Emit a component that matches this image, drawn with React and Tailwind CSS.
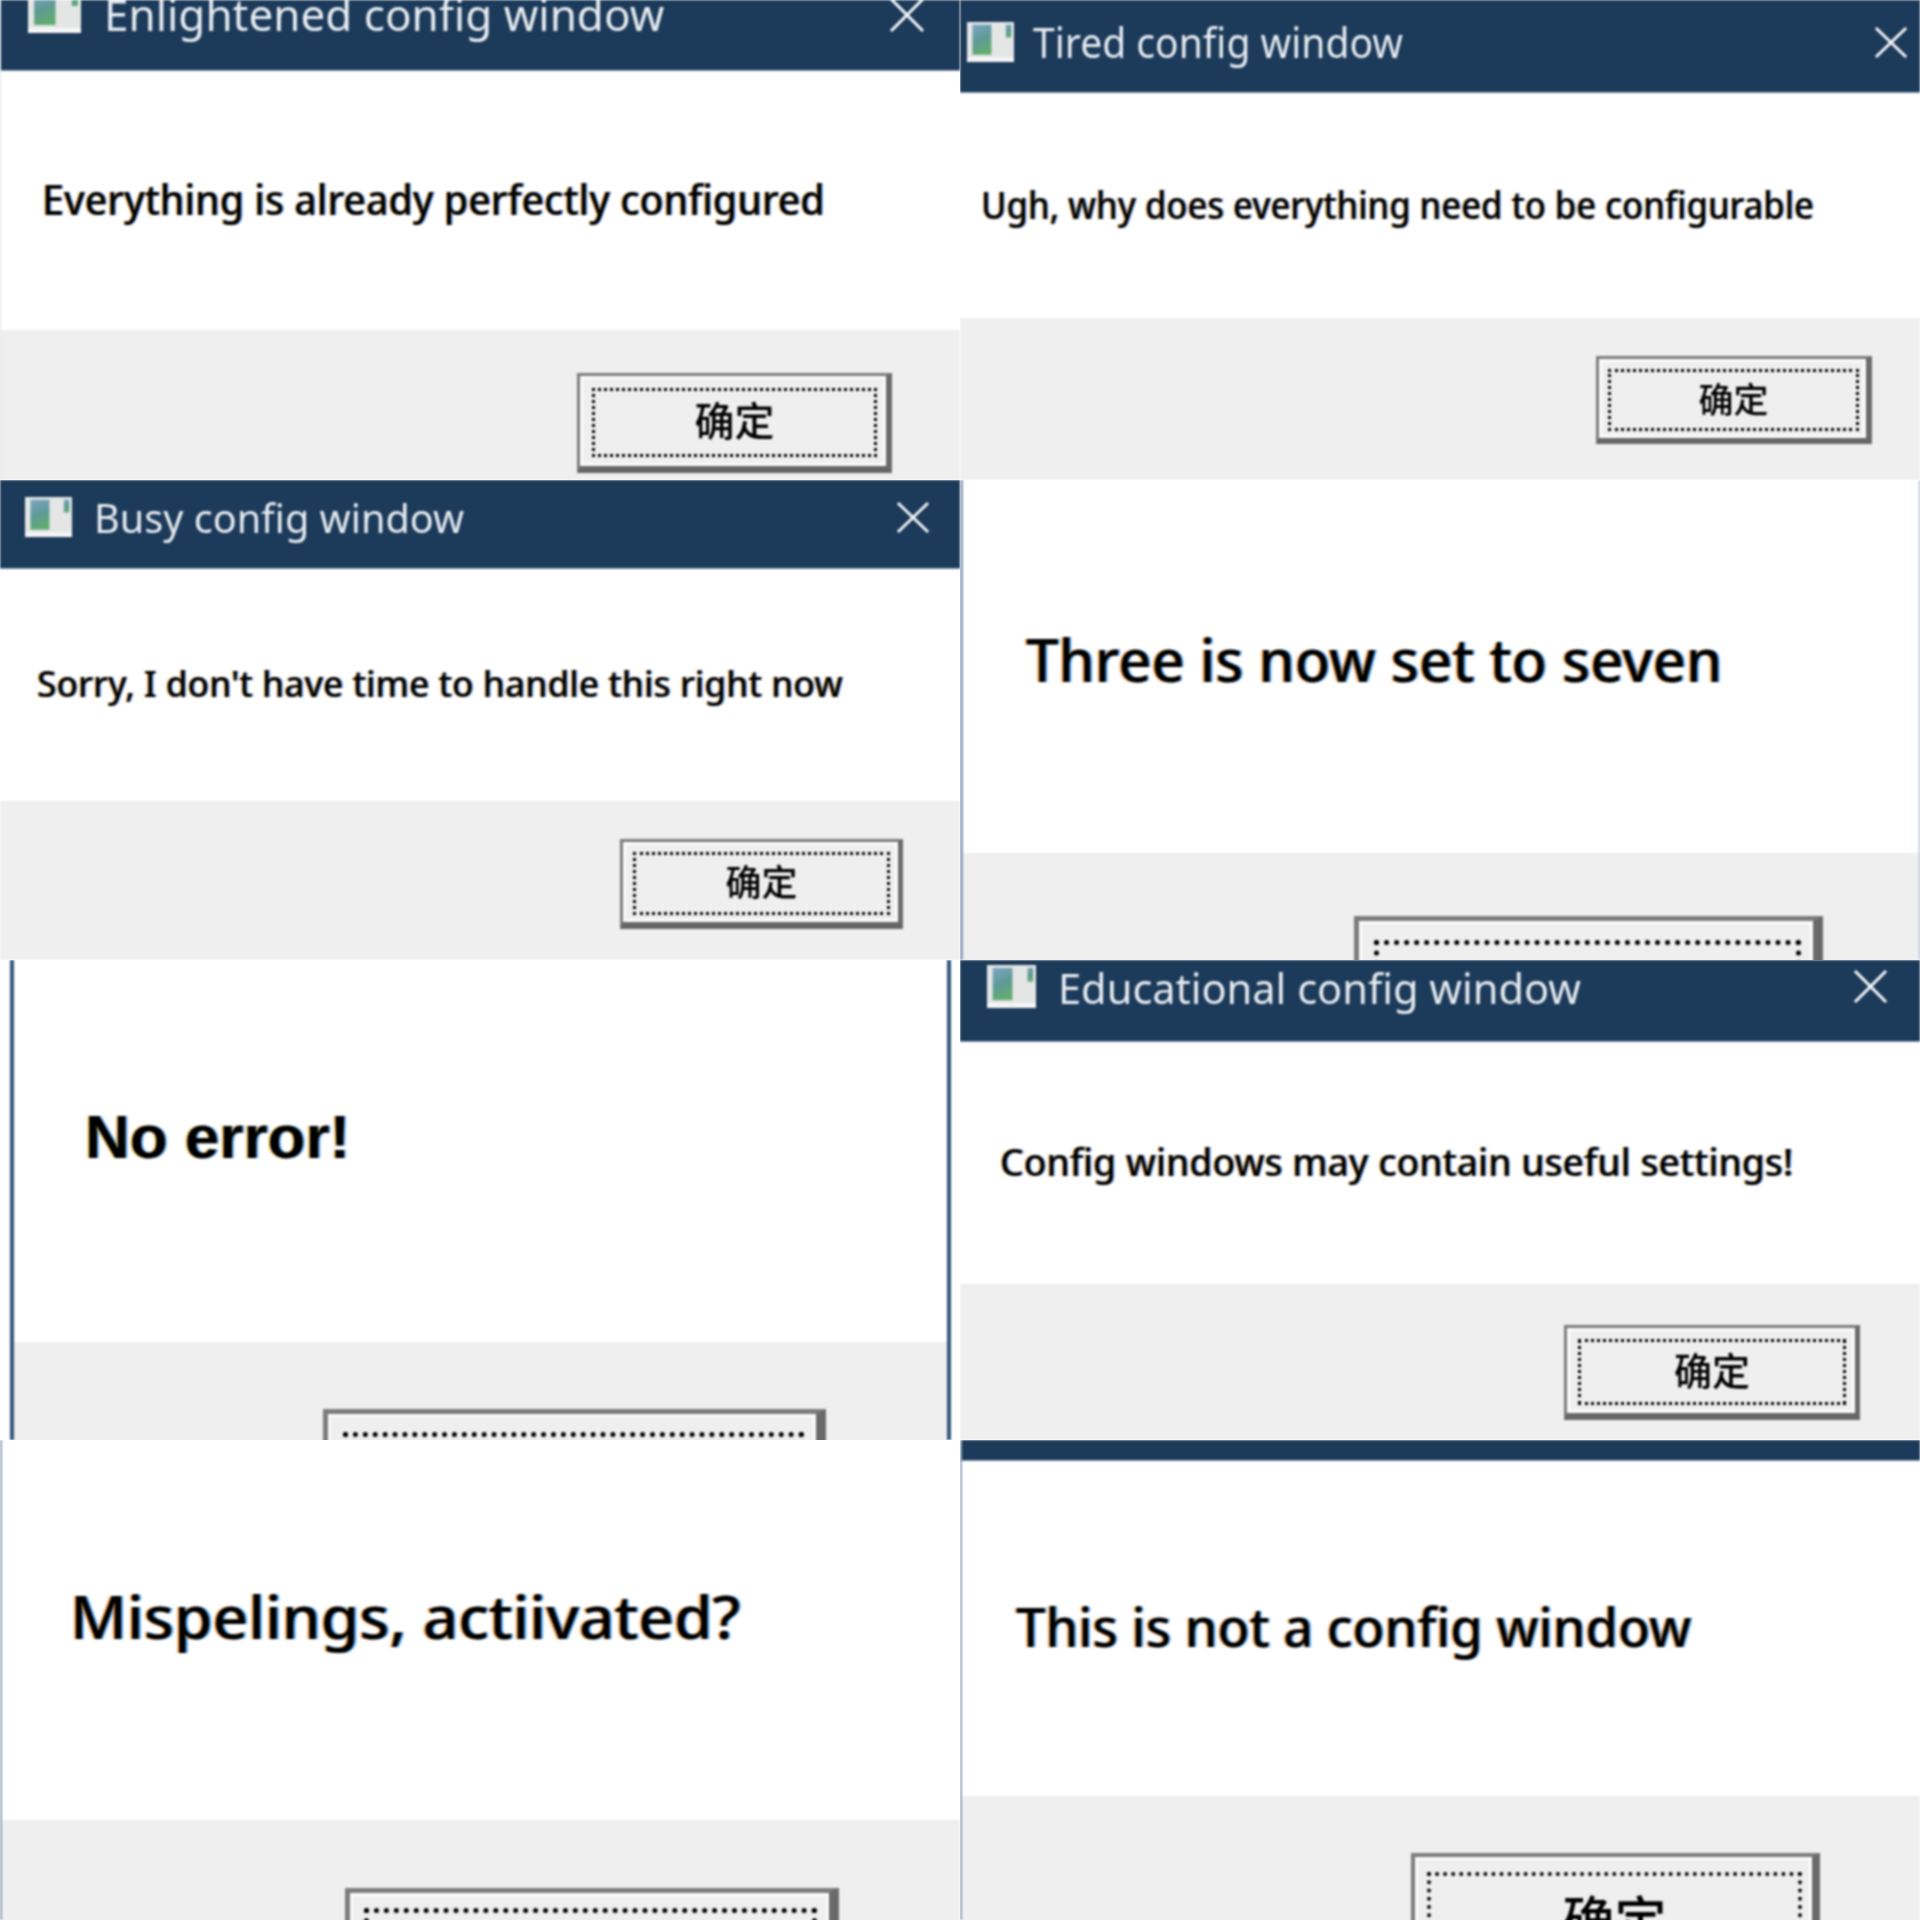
const sans = "font-['Noto_Sans','Noto_Sans_CJK_SC',sans-serif]";

function AppIcon({ cls }) {
  return (
    <svg viewBox="0 0 52 44" className={cls} preserveAspectRatio="none">
      <defs>
        <linearGradient id="winpanel" x1="0" y1="0" x2="0.3" y2="1">
          <stop offset="0" stopColor="#7da6c4" />
          <stop offset="0.55" stopColor="#5f9a98" />
          <stop offset="1" stopColor="#62ab72" />
        </linearGradient>
      </defs>
      <rect x="0" y="0" width="52" height="44" fill="#e4e6e6" />
      <rect x="0" y="39" width="52" height="5" fill="#f6f6f6" />
      <rect x="6" y="3" width="21" height="33" fill="url(#winpanel)" />
      <rect x="43" y="3" width="6" height="14" fill="url(#winpanel)" />
    </svg>
  );
}

function CloseIcon({ cls }) {
  return (
    <svg viewBox="0 0 36 34" className={cls} preserveAspectRatio="none">
      <path d="M2 1 L34 33 M34 1 L2 33" stroke="#f4f6f8" strokeWidth="3" fill="none" />
    </svg>
  );
}

function OkButton({ btn, inner, focus, label }) {
  return (
    <div className={`flex shrink-0 border-t-[#7c7c7c] border-l-[#7c7c7c] border-r-[#6a6a6a] border-b-[#666666] bg-[#efefef] ${btn}`}>
      <div className={`flex flex-1 bg-[#efefef] shadow-[inset_0_0_0_3px_#fbfbfb] ${inner}`}>
        <div className={`flex flex-1 items-center justify-center border-dotted border-black font-medium text-black leading-none ${focus} ${label}`}>
          确定
        </div>
      </div>
    </div>
  );
}

function Dialog({ d }) {
  return (
    <div className={`h-[480px] overflow-hidden bg-white ${sans}`}>
      <div className={`flex h-full flex-col blur-[0.9px] ${d.frame}`}>
        {d.bar && (
          <div className={`flex shrink-0 items-start overflow-hidden bg-[#1c3a5a] border-b border-[#8fa2b8] ${d.bar}`}>
            {d.title && <AppIcon cls={`shrink-0 ${d.icon}`} />}
            {d.title && (
              <span className={`whitespace-nowrap leading-none text-[#e6ebf0] origin-left ${d.titleCls}`}>{d.title}</span>
            )}
            {d.title && <CloseIcon cls={`ml-auto shrink-0 ${d.close}`} />}
          </div>
        )}
        <div className={`shrink-0 bg-white ${d.body}`}>
          <p className={`whitespace-nowrap leading-none text-black origin-left ${d.msgCls}`}>{d.msg}</p>
        </div>
        <div className={`flex flex-1 items-start justify-end bg-[#efefef] ${d.foot}`}>
          <OkButton btn={d.btn} inner={d.inner} focus={d.focus} label={d.label} />
        </div>
      </div>
    </div>
  );
}

const dialogs = [
  {
    frame: "border-l border-[#d8dde3]",
    bar: "h-[71px]",
    title: "Enlightened config window",
    icon: "-mt-[11px] ml-[27px] h-[44px] w-[53px]",
    titleCls: "-mt-[8px] ml-[23px] text-[44px] scale-x-[1.0]",
    close: "-mt-[2px] mr-[35px] h-[34px] w-[36px]",
    body: "h-[259px] pl-[41px] pt-[107px]",
    msgCls: "font-medium text-[42px] scale-x-[0.937] [text-shadow:-1.5px_0_0_rgba(255,150,0,.6),1.5px_0_0_rgba(0,110,255,.6)]",
    msg: "Everything is already perfectly configured",
    foot: "pr-[68px] pt-[43px]",
    btn: "h-[100px] w-[315px] border-t-[3px] border-l-[3px] border-r-[6px] border-b-[7px]",
    inner: "pt-[12px] pl-[12px] pr-[9px] pb-[9px]",
    focus: "border-[3px] pb-[4px]",
    label: "text-[40px]",
  },
  {
    frame: "",
    bar: "h-[93px]",
    title: "Tired config window",
    icon: "mt-[22px] ml-[7px] h-[40px] w-[47px]",
    titleCls: "mt-[21px] ml-[19px] text-[42px] scale-x-[0.93]",
    close: "mt-[27px] mr-[12px] h-[31px] w-[34px]",
    body: "h-[225px] pl-[21px] pt-[92px]",
    msgCls: "font-medium text-[38px] scale-x-[0.91] [text-shadow:-1.5px_0_0_rgba(255,150,0,.55),1.5px_0_0_rgba(0,110,255,.55)]",
    msg: "Ugh, why does everything need to be configurable",
    foot: "pr-[48px] pt-[38px]",
    btn: "h-[88px] w-[276px] border-t-[3px] border-l-[3px] border-r-[6px] border-b-[6px]",
    inner: "pt-[10px] pl-[9px] pr-[7px] pb-[7px]",
    focus: "border-[3px] pb-[2px]",
    label: "text-[35px]",
  },
  {
    frame: "",
    bar: "h-[89px]",
    title: "Busy config window",
    icon: "mt-[17px] ml-[25px] h-[40px] w-[47px]",
    titleCls: "mt-[18px] ml-[22px] text-[40px] scale-x-[0.99]",
    close: "mt-[22px] mr-[30px] h-[31px] w-[34px]",
    body: "h-[232px] pl-[37px] pt-[95px]",
    msgCls: "font-medium text-[37px] scale-x-[0.955] [text-shadow:-1.5px_0_0_rgba(255,150,0,.55),1.5px_0_0_rgba(0,110,255,.55)]",
    msg: "Sorry, I don't have time to handle this right now",
    foot: "pr-[57px] pt-[38px]",
    btn: "h-[90px] w-[283px] border-t-[3px] border-l-[3px] border-r-[5px] border-b-[7px]",
    inner: "pt-[10px] pl-[10px] pr-[8px] pb-[7px]",
    focus: "border-[3px] pb-[1px]",
    label: "text-[36px]",
  },
  {
    frame: "border-l-[3px] border-r border-[#8ea2b8]",
    body: "h-[373px] pl-[63px] pt-[149px]",
    msgCls: "font-medium text-[60px] scale-x-[0.965] [text-shadow:-2px_0_0_rgba(255,130,0,.65),2px_0_0_rgba(0,130,255,.65)]",
    msg: "Three is now set to seven",
    foot: "pr-[96px] pt-[63px]",
    btn: "h-[155px] w-[469px] border-t-[5px] border-l-[5px] border-r-[10px] border-b-[10px]",
    inner: "pt-[19px] pl-[15px] pr-[12px] pb-[12px]",
    focus: "border-[5px]",
    label: "text-[56px]",
  },
  {
    frame: "ml-[10px] mr-[9px] border-x-[4px] border-[#34557c]",
    body: "h-[382px] pl-[71px] pt-[146px]",
    msgCls: "font-['Liberation_Sans',sans-serif] font-bold text-[62px] scale-x-[1.0] [text-shadow:-2px_0_0_rgba(255,170,0,.55),2px_0_0_rgba(0,130,255,.55)]",
    msg: "No error!",
    foot: "pr-[121px] pt-[67px]",
    btn: "h-[165px] w-[503px] border-t-[5px] border-l-[5px] border-r-[10px] border-b-[10px]",
    inner: "pt-[18px] pl-[15px] pr-[12px] pb-[12px]",
    focus: "border-[5px]",
    label: "text-[60px]",
  },
  {
    frame: "",
    bar: "h-[82px]",
    title: "Educational config window",
    icon: "mt-[5px] ml-[27px] h-[43px] w-[49px]",
    titleCls: "mt-[7px] ml-[22px] text-[42px] scale-x-[0.99]",
    close: "mt-[10px] mr-[32px] h-[33px] w-[35px]",
    body: "h-[242px] pl-[40px] pt-[100px]",
    msgCls: "font-medium text-[38px] scale-x-[0.98] [text-shadow:-1.5px_0_0_rgba(255,150,0,.55),1.5px_0_0_rgba(0,110,255,.55)]",
    msg: "Config windows may contain useful settings!",
    foot: "pr-[60px] pt-[41px]",
    btn: "h-[95px] w-[296px] border-t-[3px] border-l-[3px] border-r-[5px] border-b-[7px]",
    inner: "pt-[11px] pl-[11px] pr-[9px] pb-[8px]",
    focus: "border-[3px] pb-[4px]",
    label: "text-[38px]",
  },
  {
    frame: "border-l-[2px] border-[#8ea2b8]",
    body: "h-[380px] pl-[68px] pt-[146px]",
    msgCls: "font-medium text-[60px] scale-x-[1.036] [text-shadow:-2px_0_0_rgba(255,130,0,.65),2px_0_0_rgba(0,130,255,.65)]",
    msg: "Mispelings, actiivated?",
    foot: "pr-[121px] pt-[68px]",
    btn: "h-[160px] w-[494px] border-t-[5px] border-l-[5px] border-r-[10px] border-b-[10px]",
    inner: "pt-[15px] pl-[14px] pr-[12px] pb-[12px]",
    focus: "border-[5px]",
    label: "text-[60px]",
  },
  {
    frame: "border-l-[2px] border-[#8ea2b8]",
    bar: "h-[21px]",
    body: "h-[335px] pl-[54px] pt-[138px]",
    msgCls: "font-medium text-[54px] scale-x-[0.97] [text-shadow:-2px_0_0_rgba(255,130,0,.6),2px_0_0_rgba(0,130,255,.6)]",
    msg: "This is not a config window",
    foot: "pr-[100px] pt-[57px]",
    btn: "h-[132px] w-[409px] border-t-[4px] border-l-[4px] border-r-[8px] border-b-[8px]",
    inner: "pt-[15px] pl-[12px] pr-[10px] pb-[10px]",
    focus: "border-[4px]",
    label: "text-[52px]",
  },
];

export default function App() {
  return (
    <div className="grid w-[1920px] grid-cols-2 bg-white">
      {dialogs.map((d, i) => (
        <Dialog key={i} d={d} />
      ))}
    </div>
  );
}
